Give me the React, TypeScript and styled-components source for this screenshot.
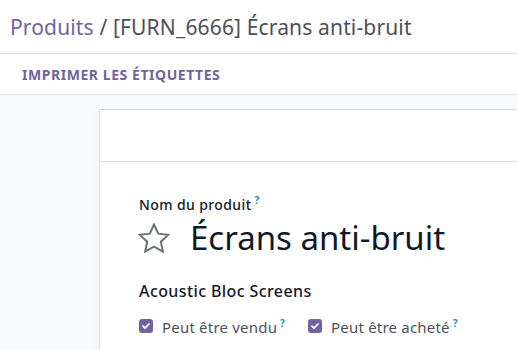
import styled, { createGlobalStyle } from 'styled-components';

const GlobalStyle = createGlobalStyle`
  body {
    margin: 0;
    background: #ffffff;
    font-family: 'Noto Sans', 'Open Sans', sans-serif;
    color: #212529;
  }
`;

const Page = styled.div`
  width: 517px;
  height: 350px;
  overflow: hidden;
  display: flex;
  flex-direction: column;
`;

const Breadcrumbs = styled.div`
  height: 53px;
  display: flex;
  align-items: center;
  padding-left: 10px;
  border-bottom: 1px solid #dee2e6;
  font-size: 21px;
  letter-spacing: 0.15px;
  white-space: nowrap;
`;

const Crumb = styled.span`
  color: #71639e;
`;

const Current = styled.span`
  color: #4b5058;
`;

const Toolbar = styled.div`
  height: 40px;
  display: flex;
  align-items: center;
  padding-left: 22px;
  border-bottom: 1px solid #dee2e6;
`;

const LinkButton = styled.button`
  background: none;
  border: 0;
  padding: 0;
  font-family: inherit;
  font-size: 14px;
  font-weight: 700;
  letter-spacing: 0.55px;
  color: #71639e;
  text-transform: uppercase;
  cursor: pointer;
`;

const Content = styled.div`
  flex: 1;
  background: #f9fafb;
  padding: 14px 0 0 99px;
`;

const Sheet = styled.div`
  width: 460px;
  height: 100%;
  background: #ffffff;
  border: 1px solid #dcdee2;
  border-right: 0;
  box-shadow: -2px 0 6px rgba(0, 0, 0, 0.04);
`;

const StatusBar = styled.div`
  height: 51px;
  border-bottom: 1px solid #dcdee2;
`;

const SheetBody = styled.div`
  padding: 28px 0 0 39px;
`;

const FieldLabel = styled.div`
  font-size: 14px;
  font-weight: 500;
  letter-spacing: 0.4px;
  color: #111827;
  line-height: 20px;
`;

const Hint = styled.sup`
  color: #1a93b3;
  font-size: 10px;
  font-weight: 700;
  margin-left: 3px;
`;

const TitleRow = styled.div`
  display: flex;
  align-items: center;
  gap: 20px;
  margin: 1px 0 0 -1px;
`;

const Title = styled.h1`
  margin: 0;
  font-size: 33px;
  font-weight: 400;
  line-height: 44px;
  color: #111827;
`;

const Category = styled.div`
  margin-top: 20px;
  font-size: 16px;
  font-weight: 500;
  letter-spacing: 0.4px;
  color: #111827;
`;

const Checks = styled.div`
  display: flex;
  gap: 23px;
  margin-top: 14px;
`;

const CheckItem = styled.label`
  display: flex;
  align-items: center;
  gap: 9px;
  font-size: 15px;
  letter-spacing: 0.2px;
  color: #4b5058;
`;

const Box = styled.span`
  width: 14px;
  height: 14px;
  border-radius: 3px;
  background: #71639e;
  display: flex;
  align-items: center;
  justify-content: center;
`;

const Star = () => (
  <svg width="32" height="30" viewBox="0 0 32 30" fill="none" stroke="#6c7178" strokeWidth="2" strokeLinejoin="miter">
    <path d="M16 1.5L20.23 10.68 30.27 11.86 22.85 18.72 24.82 28.64 16 23.7 7.18 28.64 9.15 18.72 1.73 11.86 11.77 10.68Z" />
  </svg>
);

const Check = ({ label }: { label: string }) => (
  <CheckItem>
    <Box>
      <svg width="10" height="10" viewBox="0 0 10 10">
        <path d="M2 5.2l2 2 4-4.2" stroke="#fff" strokeWidth="1.8" fill="none" strokeLinecap="round" strokeLinejoin="round" />
      </svg>
    </Box>
    <span>
      {label}
      <Hint>?</Hint>
    </span>
  </CheckItem>
);

export default function App() {
  return (
    <Page>
      <GlobalStyle />
      <Breadcrumbs>
        <Crumb>Produits</Crumb>
        <Current>&nbsp;/ [FURN_6666] Écrans anti-bruit</Current>
      </Breadcrumbs>
      <Toolbar>
        <LinkButton>Imprimer les étiquettes</LinkButton>
      </Toolbar>
      <Content>
        <Sheet>
          <StatusBar />
          <SheetBody>
            <FieldLabel>
              Nom du produit<Hint>?</Hint>
            </FieldLabel>
            <TitleRow>
              <Star />
              <Title>Écrans anti-bruit</Title>
            </TitleRow>
            <Category>Acoustic Bloc Screens</Category>
            <Checks>
              <Check label="Peut être vendu" />
              <Check label="Peut être acheté" />
            </Checks>
          </SheetBody>
        </Sheet>
      </Content>
    </Page>
  );
}
